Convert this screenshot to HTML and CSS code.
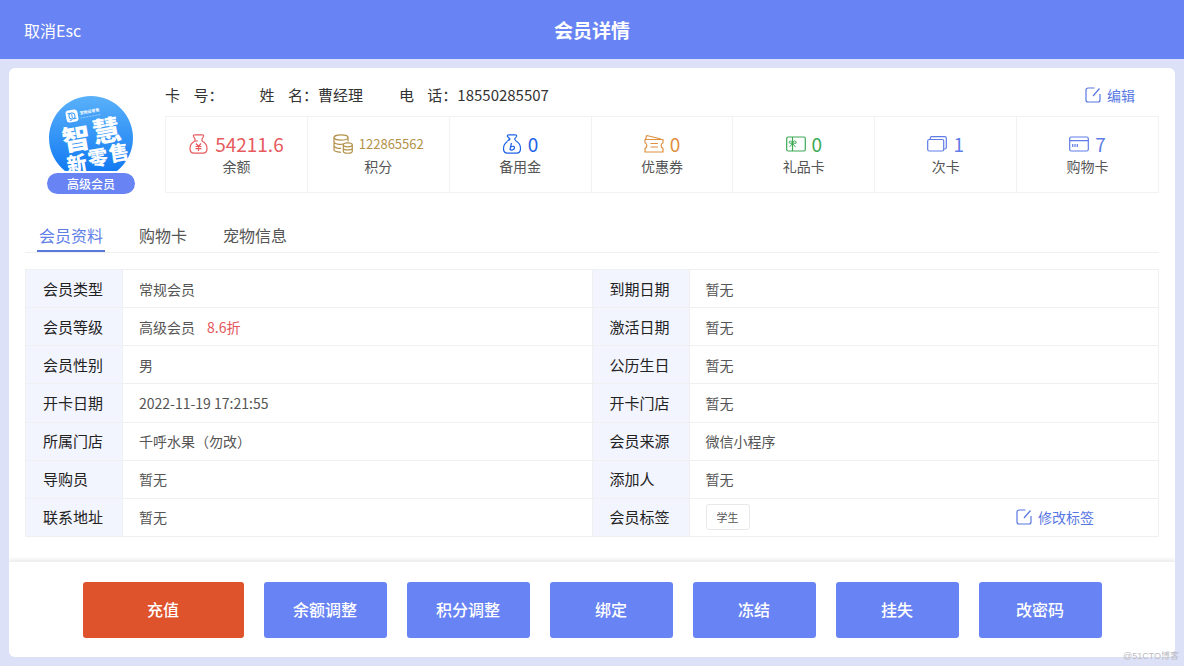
FILE: index.html
```html
<!DOCTYPE html>
<html lang="zh-CN">
<head>
<meta charset="utf-8">
<meta name="viewport" content="width=device-width, initial-scale=1">
<title>会员详情</title>
<link rel="stylesheet" href="styles.css">
</head>
<body>
<header class="topbar">
  <button type="button" class="cancel">取消Esc</button>
  <h1 class="title">会员详情</h1>
</header>

<main class="card">
  <div class="content">
    <section class="profile">
      <div class="member">
        <svg class="avatar" viewBox="0 0 84 75" aria-hidden="true">
          <defs>
            <linearGradient id="sky" x1="0" y1="0" x2="0" y2="1">
              <stop offset="0" stop-color="#5ab1fa"/>
              <stop offset="1" stop-color="#137bf3"/>
            </linearGradient>
          </defs>
          <path d="M16 75A42 42 0 1 1 68 75z" fill="url(#sky)"/>
          <g transform="rotate(-10 23 20)">
            <rect x="17" y="14" width="12" height="12" rx="3" fill="#fff"/>
            <circle cx="23" cy="20" r="3" fill="none" stroke="#3a9af7"/>
            <path d="M19 17h3M24 23h3M23 18v4M20 24h2" stroke="#3a9af7" fill="none"/>
            <text class="logo-name" x="31" y="20">宝物云零售</text>
            <path d="M31 23.500h20" stroke="#fff" stroke-width=".7" stroke-dasharray="2 1" opacity=".6"/>
          </g>
          <text class="logo-big" text-anchor="middle" transform="translate(29 53) rotate(-10)">智</text>
          <text class="logo-big" text-anchor="middle" transform="translate(59 45) rotate(-10)">慧</text>
          <text class="logo-small" text-anchor="middle" transform="translate(29 75) rotate(-10)">新</text>
          <text class="logo-small" text-anchor="middle" transform="translate(50 69) rotate(-10)">零</text>
          <text class="logo-small" text-anchor="middle" transform="translate(71 64) rotate(-10)">售</text>
        </svg>
        <span class="level">高级会员</span>
      </div>

      <div class="summary">
        <div class="info">
          <span>卡&nbsp;&nbsp;&nbsp;&nbsp;号：</span>
          <span>姓&nbsp;&nbsp;&nbsp;&nbsp;名：曹经理</span>
          <span>电&nbsp;&nbsp;&nbsp;&nbsp;话：18550285507</span>
          <a class="action edit" href="#edit">
            <svg class="action-icon" viewBox="0 0 16 16"><path d="M9.500 1H3a2 2 0 0 0-2 2v10a2 2 0 0 0 2 2h10a2 2 0 0 0 2-2V7M14.500 1.500 8 9"/></svg>编辑
          </a>
        </div>
        <ul class="stats">
          <li class="stat red">
            <div class="figure">
              <svg class="icon" viewBox="0 0 20 20"><path d="M6 5 4.500 2.500Q4 .8 6 .8h7q2 0 1.500 1.700L13 5v2c3 1.500 5 4.500 5 7.500 0 3-1.500 4.700-4 4.700H5c-2.500 0-4-1.700-4-4.700C1 11.500 3 8.500 6 7zM5.500 7H9M7 9.500l2.500 3 2.500-3M6.500 12.500h6M6.500 14.700h6M9.500 12.500V17"/></svg>
              <span>54211.6</span>
            </div>
            <div class="name">余额</div>
          </li>
          <li class="stat gold">
            <div class="figure">
              <svg class="icon" viewBox="0 0 20 20"><ellipse cx="8" cy="3.500" rx="7" ry="2.700"/><path d="M1 3.500v12.300c0 1.200 3 2.200 7 2.500M15 3.500v4M1 7.500c0 3 7 3.300 9.500 2.300M1 11.700c0 2 4 2.800 7 2.700"/><ellipse cx="14.800" cy="10.800" rx="4.500" ry="2"/><path d="M10.300 10.800v6.500c0 2.600 9 2.600 9 0v-6.500M10.300 14c0 2.600 9 2.600 9 0"/></svg>
              <span class="long">122865562</span>
            </div>
            <div class="name">积分</div>
          </li>
          <li class="stat blue">
            <div class="figure">
              <svg class="icon" viewBox="0 0 20 20"><path d="M7.500 6.500H6L8 5 5.500 2.500Q5 .8 7 .8h6q2 0 1.500 1.700L12.500 5l1.500 2c3 1.500 4.500 4.500 4.500 7.500 0 3-1.500 4.700-4 4.700h-9c-2.500 0-4-1.700-4-4.700 0-3 1.500-5.500 4-7.300M9.500 9 8 15.500c1 1 4 .5 4.500-1.500.3-2-2-2.300-4-.8"/></svg>
              <span>0</span>
            </div>
            <div class="name">备用金</div>
          </li>
          <li class="stat orange">
            <div class="figure">
              <svg class="icon" viewBox="0 0 20 20"><path d="M1 5.500h18v3.200c-2.500 1.300-2.500 4.500 0 5.800V18H1v-3.500c2.500-1.300 2.500-4.500 0-5.800zM1.500 5 2.800 1.500 17 5M6.500 9.500h7.500M6.500 13h7.500"/></svg>
              <span>0</span>
            </div>
            <div class="name">优惠券</div>
          </li>
          <li class="stat green">
            <div class="figure">
              <svg class="icon" viewBox="0 0 20 20"><rect x=".7" y="3" width="18.600" height="14" rx="1.500"/><path d="M6.500 3v14"/><path d="M6.500 9C5 5.500 2 7.500 3.500 9.200H10C11 7 8 5.500 6.500 9zM6.500 9.500 3.500 13M6.500 9.500l3 3.500" stroke-width="1"/></svg>
              <span>0</span>
            </div>
            <div class="name">礼品卡</div>
          </li>
          <li class="stat indigo">
            <div class="figure">
              <svg class="icon" viewBox="0 0 20 20"><rect x=".7" y="5.500" width="16" height="11.500" rx="1.500"/><path d="M3.300 5.500V4.200q0-1.500 1.500-1.500h13q1.500 0 1.500 1.500v9.300q0 1.500-1.500 1.500h-1"/></svg>
              <span>1</span>
            </div>
            <div class="name">次卡</div>
          </li>
          <li class="stat indigo">
            <div class="figure">
              <svg class="icon" viewBox="0 0 20 20"><rect x=".7" y="3" width="18.600" height="14" rx="1.500"/><path d="M.7 6.700h18.600M3.700 10v3M6 10v3M8.300 10v3"/></svg>
              <span>7</span>
            </div>
            <div class="name">购物卡</div>
          </li>
        </ul>
      </div>
    </section>

    <nav class="tabs">
      <button type="button" class="tab active">会员资料</button>
      <button type="button" class="tab">购物卡</button>
      <button type="button" class="tab">宠物信息</button>
    </nav>

    <table class="details">
      <tr><th scope="row">会员类型</th><td>常规会员</td><th scope="row">到期日期</th><td>暂无</td></tr>
      <tr><th scope="row">会员等级</th><td>高级会员<span class="discount">8.6折</span></td><th scope="row">激活日期</th><td>暂无</td></tr>
      <tr><th scope="row">会员性别</th><td>男</td><th scope="row">公历生日</th><td>暂无</td></tr>
      <tr><th scope="row">开卡日期</th><td>2022-11-19 17:21:55</td><th scope="row">开卡门店</th><td>暂无</td></tr>
      <tr><th scope="row">所属门店</th><td>千呼水果（勿改）</td><th scope="row">会员来源</th><td>微信小程序</td></tr>
      <tr><th scope="row">导购员</th><td>暂无</td><th scope="row">添加人</th><td>暂无</td></tr>
      <tr><th scope="row">联系地址</th><td>暂无</td><th scope="row">会员标签</th><td>
        <div class="tag-row">
          <span class="tag">学生</span>
          <a class="action" href="#tags">
            <svg class="action-icon" viewBox="0 0 16 16"><path d="M9.500 1H3a2 2 0 0 0-2 2v10a2 2 0 0 0 2 2h10a2 2 0 0 0 2-2V7M14.500 1.500 8 9"/></svg>修改标签
          </a>
        </div>
      </td></tr>
    </table>
  </div>

  <footer class="actions">
    <button type="button" class="btn primary">充值</button>
    <button type="button" class="btn">余额调整</button>
    <button type="button" class="btn">积分调整</button>
    <button type="button" class="btn">绑定</button>
    <button type="button" class="btn">冻结</button>
    <button type="button" class="btn">挂失</button>
    <button type="button" class="btn">改密码</button>
  </footer>
</main>
<div class="watermark">@51CTO博客</div>
</body>
</html>
```
FILE: styles.css
```css
* {
  box-sizing: border-box;
}

body {
  margin: 0;
  min-height: 100vh;
  display: flex;
  flex-direction: column;
  background: #dde1f8;
  color: #333;
  font-family: "Noto Sans CJK SC", "Noto Sans", sans-serif;
  font-size: 14px;
  line-height: 20px;
}

button {
  border: 0;
  padding: 0;
  background: none;
  font-family: inherit;
  cursor: pointer;
}

.topbar {
  display: grid;
  grid-template-columns: 1fr auto 1fr;
  align-items: center;
  padding: 16px 24px 15px;
  background: #6884f4;
  color: #fff;
}

.cancel {
  justify-self: start;
  color: #fff;
  font-size: 16px;
  line-height: 28px;
}

.title {
  margin: 0;
  font-size: 19px;
  font-weight: 700;
  line-height: 28px;
}

.card {
  flex: 1;
  display: flex;
  flex-direction: column;
  margin: 9px;
  border-radius: 6px;
  background: #fff;
  overflow: hidden;
}

.content {
  flex: 1;
  padding: 15px 16px 24px;
}

.profile {
  display: flex;
}

.member {
  flex: none;
  width: 140px;
  padding: 13px 8px 0 0;
  display: flex;
  flex-direction: column;
  align-items: center;
  gap: 2px;
}

.avatar {
  display: block;
  width: 84px;
  height: 75px;
  overflow: visible;
}

.logo-name {
  fill: #fff;
  font-size: 4px;
  font-weight: 700;
}

.logo-big {
  fill: #fff;
  font-size: 28px;
  font-weight: 900;
}

.logo-small {
  fill: #fff;
  font-size: 20px;
  font-weight: 900;
}

.level {
  width: 88px;
  border-radius: 11px;
  background: #6884f4;
  color: #fff;
  font-size: 12px;
  font-weight: 500;
  line-height: 21px;
  text-align: center;
}

.summary {
  flex: 1;
}

.info {
  display: flex;
  gap: 36px;
  padding-right: 24px;
  font-size: 15px;
  line-height: 24px;
}

.action {
  display: flex;
  align-items: center;
  gap: 6px;
  color: #5878e4;
  font-size: 14px;
  text-decoration: none;
}

.edit {
  margin-left: auto;
}

.action-icon {
  width: 16px;
  height: 16px;
  fill: none;
  stroke: currentColor;
  stroke-width: 1.2;
}

.stats {
  display: grid;
  grid-template-columns: repeat(7, 1fr);
  margin: 9px 0 0;
  padding: 0;
  border: 1px solid #f2f2f2;
  border-left: 0;
  list-style: none;
}

.stat {
  padding: 15px 0 16px;
  border-left: 1px solid #f2f2f2;
  text-align: center;
}

.figure {
  display: flex;
  align-items: center;
  justify-content: center;
  gap: 6px;
  font-size: 19px;
  line-height: 24px;
}

.long {
  font-size: 13px;
}

.icon {
  width: 20px;
  height: 20px;
  fill: none;
  stroke: currentColor;
  stroke-width: 1.2;
  stroke-linejoin: round;
}

.name {
  color: #555;
}

.red { color: #e75a5e; }
.gold { color: #b3924a; }
.blue { color: #1e62e6; }
.orange { color: #df9040; }
.green { color: #3ba955; }
.indigo { color: #5f7ce8; }

.tabs {
  display: flex;
  gap: 32px;
  margin-top: 23px;
  padding-left: 12px;
  border-bottom: 1px solid #f0f0f0;
}

.tab {
  padding: 6px 2px 3px;
  border-bottom: 2px solid transparent;
  color: #555;
  font-size: 16px;
  line-height: 24px;
}

.tab.active {
  border-color: #5878dc;
  color: #5f7fe6;
}

.details {
  width: 100%;
  height: 268px;
  margin-top: 16px;
  border-collapse: collapse;
  table-layout: fixed;
}

.details th,
.details td {
  height: 38px;
  padding: 0 16px;
  border: 1px solid #f0f0f2;
  text-align: left;
}

.details th {
  width: 97px;
  padding: 0 0 0 17px;
  background: #f2f4fe;
  color: #222;
  font-size: 15px;
  font-weight: 400;
}

.details td {
  color: #555;
}

.discount {
  margin-left: 12px;
  color: #e4555a;
}

.tag-row {
  display: flex;
  align-items: center;
  justify-content: space-between;
  padding-right: 48px;
}

.tag {
  padding: 0 10px;
  border: 1px solid #e8e8e8;
  border-radius: 3px;
  font-size: 11px;
  line-height: 24px;
}

.actions {
  display: flex;
  justify-content: center;
  gap: 20px;
  padding: 20px 20px 19px;
  border-top: 1px solid #f0f0f0;
  box-shadow: 0 -1px 4px rgba(0, 0, 0, 0.1);
}

.btn {
  flex: 0 1 123px;
  height: 56px;
  padding-bottom: 2px;
  border-radius: 3px;
  background: #6884f4;
  color: #fff;
  font-size: 16px;
  font-weight: 500;
}

.primary {
  flex-basis: 161px;
  background: #de522c;
}

.watermark {
  position: absolute;
  right: 5px;
  bottom: 2px;
  color: #bbbbc2;
  font-family: "Liberation Sans", "Noto Sans CJK SC", sans-serif;
  font-size: 9px;
  line-height: 16px;
}
```
